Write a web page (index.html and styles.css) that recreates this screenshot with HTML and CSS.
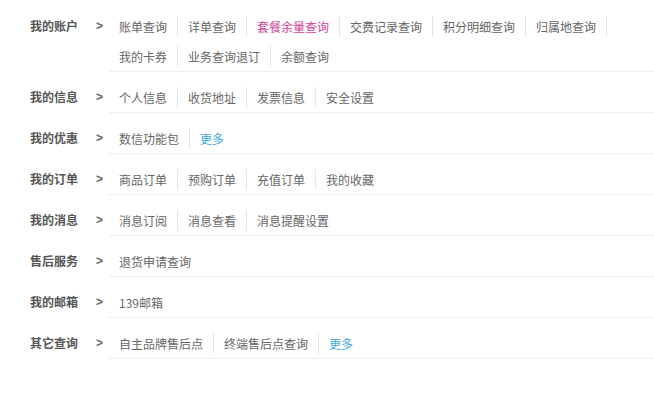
FILE: index.html
```html
<!DOCTYPE html>
<html lang="zh-CN">
<head>
<meta charset="utf-8">
<title>我的账户</title>
<link rel="stylesheet" href="styles.css">
</head>
<body>
<div class="menu">
  <div class="row">
    <div class="head"><span class="label">我的账户</span><span class="arrow">&gt;</span></div>
    <ul class="items">
      <li class="item">账单查询</li>
      <li class="item">详单查询</li>
      <li class="item pink">套餐余量查询</li>
      <li class="item">交费记录查询</li>
      <li class="item">积分明细查询</li>
      <li class="item">归属地查询</li>
      <li class="item">我的卡券</li>
      <li class="item">业务查询退订</li>
      <li class="item">余额查询</li>
    </ul>
  </div>
  <div class="row">
    <div class="head"><span class="label">我的信息</span><span class="arrow">&gt;</span></div>
    <ul class="items">
      <li class="item">个人信息</li>
      <li class="item">收货地址</li>
      <li class="item">发票信息</li>
      <li class="item">安全设置</li>
    </ul>
  </div>
  <div class="row">
    <div class="head"><span class="label">我的优惠</span><span class="arrow">&gt;</span></div>
    <ul class="items">
      <li class="item">数信功能包</li>
      <li class="item more">更多</li>
    </ul>
  </div>
  <div class="row">
    <div class="head"><span class="label">我的订单</span><span class="arrow">&gt;</span></div>
    <ul class="items">
      <li class="item">商品订单</li>
      <li class="item">预购订单</li>
      <li class="item">充值订单</li>
      <li class="item">我的收藏</li>
    </ul>
  </div>
  <div class="row">
    <div class="head"><span class="label">我的消息</span><span class="arrow">&gt;</span></div>
    <ul class="items">
      <li class="item">消息订阅</li>
      <li class="item">消息查看</li>
      <li class="item">消息提醒设置</li>
    </ul>
  </div>
  <div class="row">
    <div class="head"><span class="label">售后服务</span><span class="arrow">&gt;</span></div>
    <ul class="items">
      <li class="item">退货申请查询</li>
    </ul>
  </div>
  <div class="row">
    <div class="head"><span class="label">我的邮箱</span><span class="arrow">&gt;</span></div>
    <ul class="items">
      <li class="item">139邮箱</li>
    </ul>
  </div>
  <div class="row">
    <div class="head"><span class="label">其它查询</span><span class="arrow">&gt;</span></div>
    <ul class="items">
      <li class="item">自主品牌售后点</li>
      <li class="item">终端售后点查询</li>
      <li class="item more">更多</li>
    </ul>
  </div>
</div>
</body>
</html>
```
FILE: styles.css
```css
html, body {
  margin: 0;
  padding: 0;
  background: #fff;
}
body {
  font-family: "Noto Sans CJK SC", "Noto Sans", sans-serif;
  font-size: 12px;
  color: #666;
}
.menu {
  padding-top: 1px;
  width: 654px;
}
.row {
  display: flex;
}
.head {
  width: 109px;
  flex: none;
  display: flex;
  padding-top: 10px;
  line-height: 30px;
  box-sizing: border-box;
}
.label {
  margin-left: 30px;
  width: 66px;
  color: #555;
  font-weight: 700;
}
.arrow {
  color: #666;
  font-weight: 700;
  font-family: "Liberation Sans", sans-serif;
}
.items {
  flex: 1;
  list-style: none;
  margin: 0;
  padding: 10px 0 0 0;
  display: flex;
  flex-wrap: wrap;
  border-bottom: 1px solid #eeeeee;
}
.item {
  padding: 0 10px;
  margin: 5px 0 4px;
  line-height: 21px;
  border-right: 1px solid #e6e6e6;
}
.item:last-child {
  border-right: none;
}
.pink {
  color: #d1459b;
}
.more {
  color: #3ea7dc;
}
```
